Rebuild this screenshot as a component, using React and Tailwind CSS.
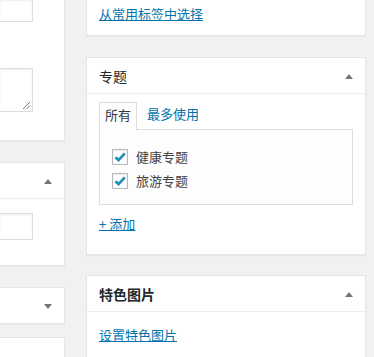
import React from "react";

const font = { fontFamily: '"Noto Sans CJK SC", "Noto Sans", sans-serif' };

function Tri({ down }) {
  return (
    <svg width="8" height="5" viewBox="0 0 8 5" className="mt-[8px] shrink-0">
      {down ? (
        <polygon points="0,0 8,0 4,5" fill="#72777c" />
      ) : (
        <polygon points="0,5 8,5 4,0" fill="#72777c" />
      )}
    </svg>
  );
}

function Check({ label }) {
  return (
    <div className="flex h-[24px] items-center gap-[8px]">
      <span className="flex h-[16px] w-[16px] items-center justify-center border border-[#b4b9be] bg-white shadow-[inset_0_1px_2px_rgba(0,0,0,0.1)]">
        <svg width="14" height="14" viewBox="0 0 14 14">
          <path d="M2.5 7.2 L5.6 10.2 L11.8 3.4" fill="none" stroke="#1e8cbe" strokeWidth="2.6" strokeLinejoin="miter" />
        </svg>
      </span>
      <span className="text-[13px] leading-[20px] text-[#444]">{label}</span>
    </div>
  );
}

const panel = "shrink-0 bg-white border border-[#e5e5e5] shadow-[0_1px_1px_rgba(0,0,0,0.04)]";

export default function App() {
  return (
    <div className="flex h-[357px] w-[374px] gap-[21px] overflow-hidden bg-[#f1f1f1] text-[13px] leading-[20px]" style={font}>
      {/* left column */}
      <div className="flex w-[65px] shrink-0 flex-col">
        <div className={`${panel} border-l-0 border-t-0 pb-[28px]`}>
          <div className="h-[22px] w-[33px] border-b border-r border-[#ddd] bg-white shadow-[inset_0_1px_2px_rgba(0,0,0,0.07)]" />
          <div className="relative mt-[46px] h-[44px] w-[33px] border-y border-r border-[#ddd] bg-white shadow-[inset_0_1px_2px_rgba(0,0,0,0.07)]">
            <svg width="9" height="9" viewBox="0 0 9 9" className="absolute bottom-[1px] right-[1px]">
              <line x1="1" y1="8" x2="8" y2="1" stroke="#666" strokeWidth="0.9" />
              <line x1="4.5" y1="8" x2="8" y2="4.5" stroke="#666" strokeWidth="0.9" />
            </svg>
          </div>
        </div>
        <div className={`${panel} mt-[21px] border-l-0 pb-[25px]`}>
          <div className="flex h-[36px] justify-end border-b border-[#eee] pr-[12px] pt-[8px]">
            <Tri />
          </div>
          <div className="mt-[14px] h-[27px] w-[33px] border-y border-r border-[#ddd] bg-white shadow-[inset_0_1px_2px_rgba(0,0,0,0.07)]" />
        </div>
        <div className={`${panel} mt-[21px] border-l-0`}>
          <div className="flex h-[35px] justify-end pr-[12px] pt-[8px]">
            <Tri down />
          </div>
        </div>
        <div className={`${panel} mt-[13px] h-[40px] border-l-0`} />
      </div>

      {/* right column */}
      <div className="flex w-[280px] shrink-0 flex-col">
        <div className={`${panel} h-[36px] border-t-0 px-[12px] pt-[4px]`}>
          <a className="text-[13px] leading-[20px] text-[#0073aa] underline">从常用标签中选择</a>
        </div>

        <div className={`${panel} mt-[21px]`}>
          <div className="flex h-[36px] items-start justify-between border-b border-[#eee] pl-[12px] pr-[12px] pt-[8px]">
            <span className="text-[14px] leading-[20px] text-[#23282d]">专题</span>
            <Tri />
          </div>
          <div className="px-[12px] pb-[20px] pt-[8px]">
            <div className="flex items-end text-[13px] leading-[18px]">
              <div className="relative z-10 -mb-px border-x border-t border-[#ddd] bg-[#fdfdfd] px-[5px] pb-[6px] pt-[3px] text-[#32373c]">
                所有
              </div>
              <div className="pb-[6px] pl-[10px] pt-[3px] text-[#0073aa]">最多使用</div>
            </div>
            <div className="border border-[#ddd] bg-[#fdfdfd] pb-[11px] pl-[12px] pt-[15px]">
              <Check label="健康专题" />
              <Check label="旅游专题" />
            </div>
            <div className="mt-[9px] text-[13px] leading-[20px]">
              <a className="text-[#0073aa] underline">+ 添加</a>
            </div>
          </div>
        </div>

        <div className={`${panel} mt-[20px]`}>
          <div className="flex h-[36px] items-start justify-between border-b border-[#eee] pl-[12px] pr-[12px] pt-[8px]">
            <span className="text-[14px] font-semibold leading-[20px] text-[#23282d]">特色图片</span>
            <Tri />
          </div>
          <div className="px-[12px] pb-[20px] pt-[13px] text-[13px] leading-[20px]">
            <a className="text-[#0073aa] underline">设置特色图片</a>
          </div>
        </div>
      </div>
    </div>
  );
}
